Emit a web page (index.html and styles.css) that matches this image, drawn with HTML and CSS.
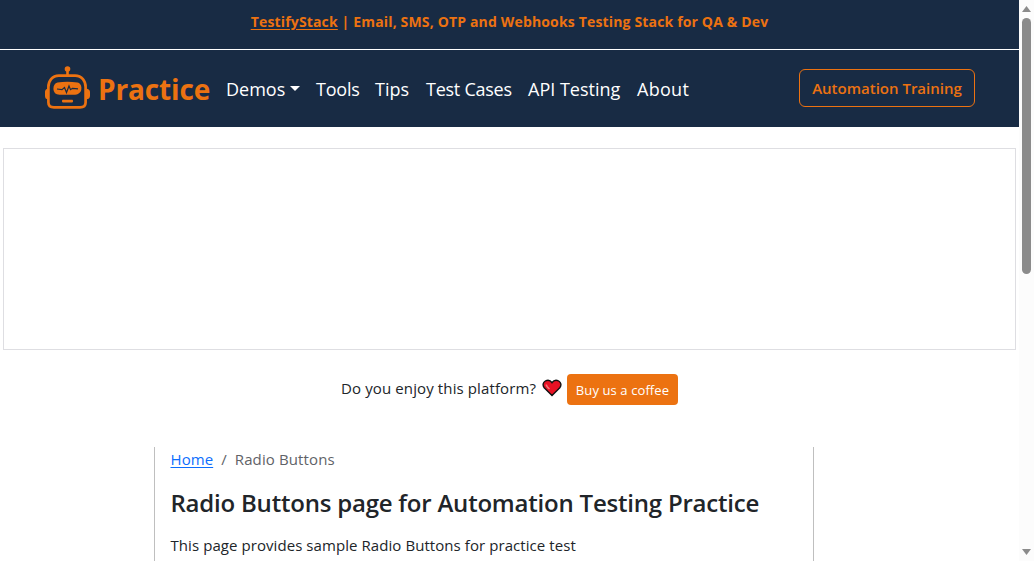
FILE: index.html
```html
<!DOCTYPE html>
<html lang="en">
<head>
<meta charset="utf-8">
<title>Radio Buttons page for Automation Testing Practice</title>
<link rel="stylesheet" href="styles.css">
</head>
<body>
<div class="viewport">
  <div class="page">
    <div class="promo"><span><a class="promo-link" href="#">TestifyStack</a> | Email, SMS, OTP and Webhooks Testing Stack for QA &amp; Dev</span></div>
    <header class="navbar">
      <a class="brand" href="#">
        <svg class="robot" viewBox="0 0 46 44" width="46" height="44" aria-hidden="true">
          <g fill="none" stroke="#ec7211">
            <path d="M23.5 4V9" stroke-width="2.6"/>
            <path d="M15 9.6H31C38 9.6 41.6 15 41.6 21V36.5Q41.6 41.4 36 41.4H10Q4.400 41.400 4.400 36.500V21C4.400 15 8 9.600 15 9.600Z" stroke-width="2.700"/>
          </g>
          <g fill="#ec7211">
            <circle cx="23.500" cy="3" r="2.800"/>
            <path d="M4 22.500Q1 23 1 26V30Q1 33 4 33.500ZM42 22.500Q46 23 46 26V30Q46 33 42 33.500Z"/>
            <path d="M13.500 16.500Q23 14.800 33.500 16.500Q37 17.300 37.400 21.500Q37.700 26 34 28Q32.800 28.800 31 28.800H15.500Q9.600 28.500 9.400 23Q9.400 17.500 13.500 16.500Z"/>
            <rect x="18" y="33.800" width="11" height="2.600" rx=".8"/>
          </g>
          <path d="M13 23L18 23.700L20.500 21.500L22.500 26.500L25 20L26.500 23.700L28.500 22.300L34 22.800" fill="none" stroke="#182b44" stroke-width="1.200"/>
        </svg>
        <span class="brand-name">Practice</span>
      </a>
      <nav class="links">
        <a class="w-demos" href="#">Demos<i class="caret"></i></a>
        <a class="w-tools" href="#">Tools</a>
        <a class="w-tips" href="#">Tips</a>
        <a class="w-cases" href="#">Test Cases</a>
        <a class="w-api" href="#">API Testing</a>
        <a class="w-about" href="#">About</a>
      </nav>
      <a class="training" href="#"><span>Automation Training</span></a>
    </header>
    <div class="ad"></div>
    <div class="support">
      <span class="question">Do you enjoy this platform?</span>
      <svg class="heart" viewBox="0 0 20 18" width="20" height="18" aria-hidden="true">
        <path d="M10 16.500L2.200 8.700C.3 6.500 1 3.200 3.300 2C5.600.8 8.400 1.400 10 3.700C11.600 1.400 14.400.8 16.700 2C19 3.200 19.700 6.500 17.800 8.700Z" fill="#e81224" stroke="#111" stroke-width="1.400"/>
        <path d="M4.300 5.500Q4.200 7.300 7.500 10" fill="none" stroke="#f4777c" stroke-width="1.500"/>
      </svg>
      <a class="coffee" href="#"><span>Buy us a coffee</span></a>
    </div>
    <main class="content">
      <nav class="crumbs"><a href="#">Home</a><span class="slash">/</span><span class="here">Radio Buttons</span></nav>
      <h1><span>Radio Buttons page for Automation Testing Practice</span></h1>
      <p><span>This page provides sample Radio Buttons for practice test</span></p>
    </main>
  </div>
  <div class="scrollbar">
    <svg width="9" height="6" viewBox="0 0 9 6"><path d="M4.500 0L9 6H0Z" fill="#8b8b8b"/></svg>
    <div class="thumb"></div>
    <svg class="down" width="9" height="6" viewBox="0 0 9 6"><path d="M0 0H9L4.500 6Z" fill="#8b8b8b"/></svg>
  </div>
</div>
</body>
</html>
```
FILE: styles.css
```css
* { box-sizing: border-box; }
body {
  margin: 0;
  font-family: "Open Sans", "Noto Sans", sans-serif;
  font-size: 15px;
  line-height: 24px;
  color: #212529;
  background: #fff;
}
a { color: inherit; text-decoration: none; white-space: nowrap; }
.viewport { display: flex; height: 561px; overflow: hidden; }
.page { width: 1019px; height: 561px; overflow: hidden; }
.promo {
  height: 50px;
  padding-top: 10px;
  background: #182b44;
  border-bottom: 1px solid #fff;
  color: #ec7211;
  font-size: 14px;
  font-weight: 700;
  text-align: center;
  white-space: nowrap;
  letter-spacing: .16px;
}
.promo-link { text-decoration: underline; text-underline-offset: 2px; }
.navbar {
  display: flex;
  align-items: center;
  height: 77px;
  padding: 0 44px 1px;
  background: #182b44;
  color: #fff;
}
.brand { display: flex; align-items: center; width: 182px; color: #ec7211; }
.robot { display: block; flex: none; }
.brand-name { margin-left: 8px; padding-top: 1px; font-size: 28px; font-weight: 700; line-height: 40px; letter-spacing: -.15px; }
.links { display: flex; flex: 1; padding-top: 1px; font-size: 18px; line-height: 28px; }
.links a { display: flex; align-items: center; }
.w-demos { width: 90px; }
.w-tools { width: 59px; letter-spacing: -.2px; }
.w-tips { width: 51px; }
.w-cases { width: 102px; letter-spacing: -.25px; }
.w-api { width: 109px; }
.w-about { letter-spacing: .3px; }
.caret {
  margin-left: 5px;
  border: 5px solid transparent;
  border-top-color: #fff;
  border-bottom: 0;
}
.training {
  display: flex;
  align-items: center;
  justify-content: center;
  width: 176px;
  height: 38px;
  border: 1px solid #ec7211;
  border-radius: 6px;
  color: #ec7211;
  font-weight: 600;
}
.ad { height: 202px; margin: 21px 3px 0; border: 1px solid #dedee2; }
.support { display: flex; align-items: center; height: 31px; margin: 24px 0 42px 341px; }
.question { width: 201px; padding-bottom: 3px; white-space: nowrap; letter-spacing: .12px; }
.heart { display: block; margin: 0 5px 3px 0; }
.coffee {
  display: flex;
  align-items: center;
  justify-content: center;
  width: 111px;
  height: 31px;
  border-radius: 4px;
  background: #ec7211;
  color: #fff;
  font-size: 13px;
  letter-spacing: .1px;
}
.content {
  width: 660px;
  height: 114px;
  margin-left: 154px;
  padding-left: 15.5px;
  border: solid #bfbfbf;
  border-width: 0 1px;
  overflow: hidden;
  white-space: nowrap;
  letter-spacing: .07px;
}
.crumbs { display: flex; color: #5f6368; }
.crumbs a { color: #0d6efd; text-decoration: underline; text-underline-offset: 2px; }
.slash { margin: 0 8px; }
.here { letter-spacing: .12px; }
h1 { margin: 16px 0 15px; font-size: 24px; font-weight: 600; line-height: 31px; letter-spacing: -.21px; }
p { margin: 0; }
.scrollbar {
  display: flex;
  flex-direction: column;
  align-items: center;
  width: 15px;
  padding-top: 6px;
  background: #fcfcfc;
}
.scrollbar svg { display: block; flex: none; }
.thumb { width: 9px; height: 256px; margin-top: 6px; border-radius: 5px; background: #8b8b8b; }
.down { margin-top: auto; margin-bottom: 6px; }
```
